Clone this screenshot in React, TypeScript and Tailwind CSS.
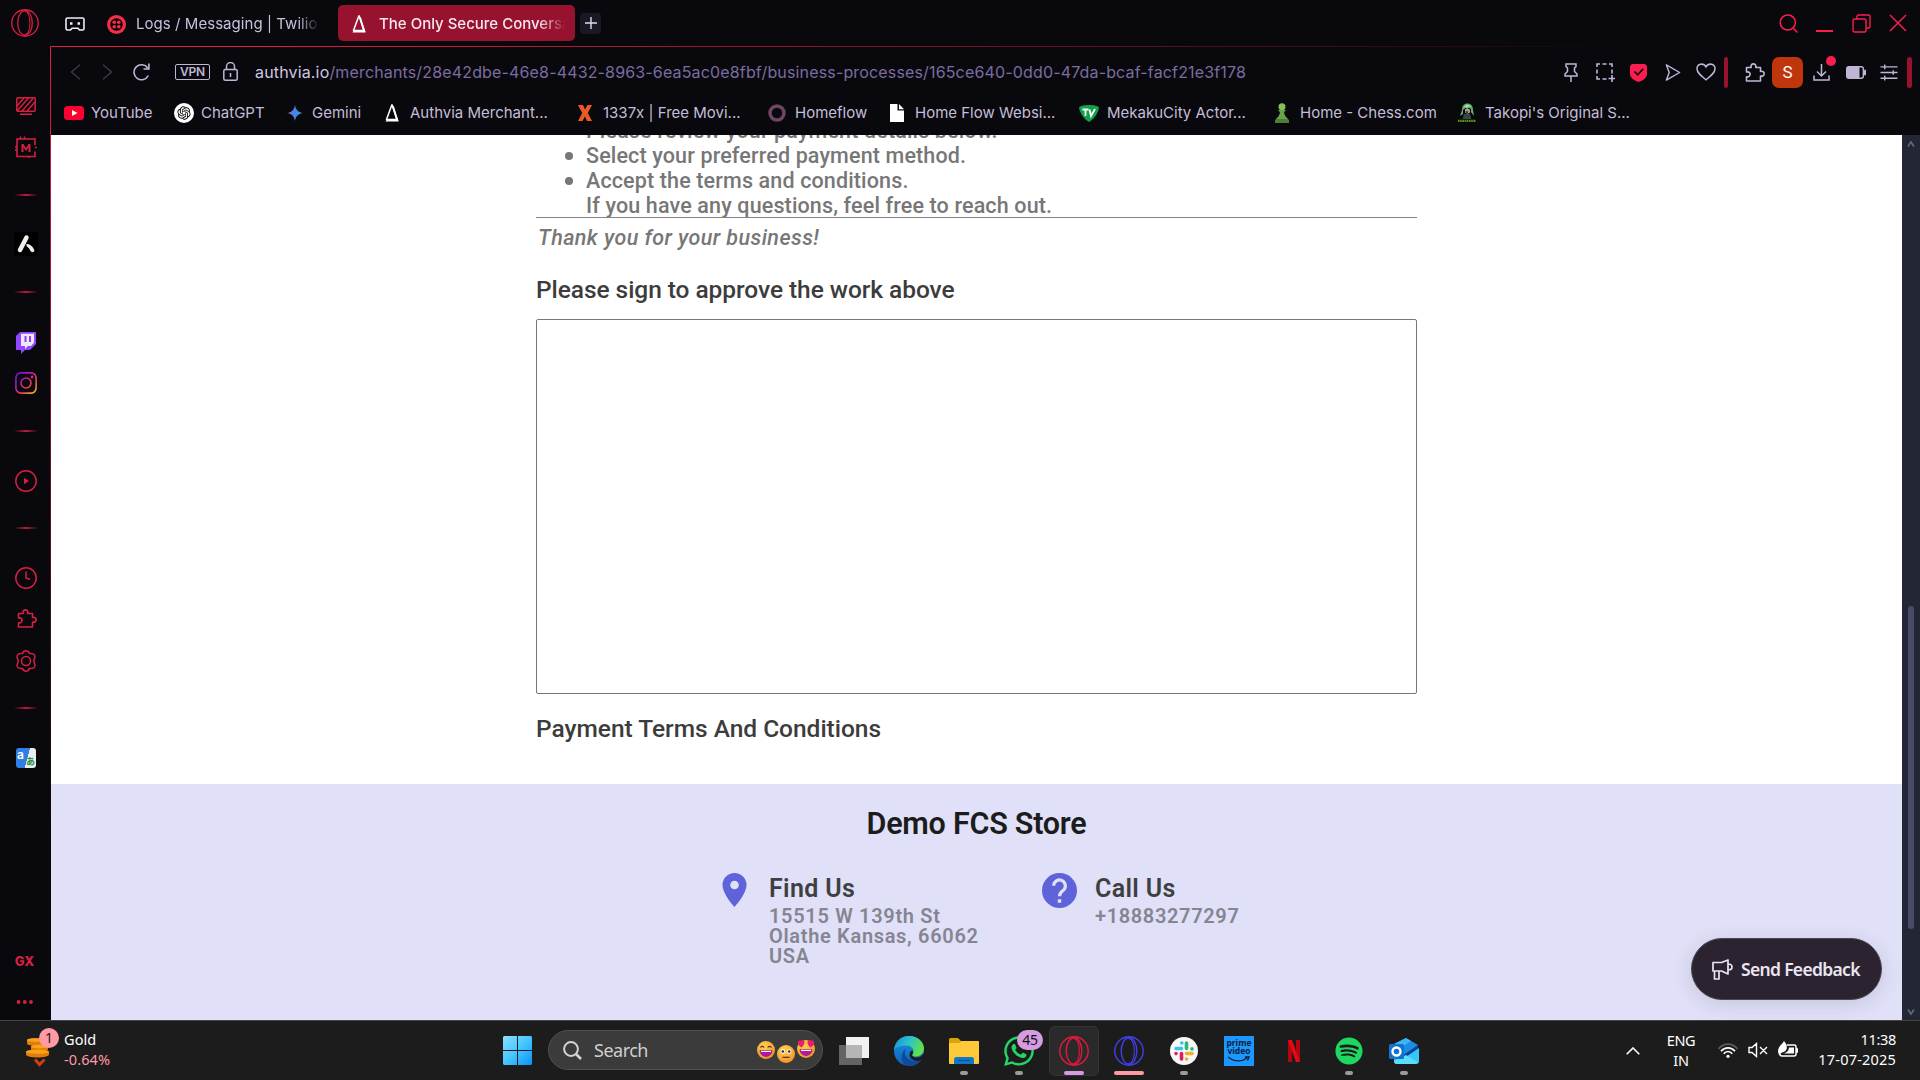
import React from "react";
import { FaSpotify, FaWhatsapp } from "react-icons/fa";
import { RiOpenaiFill } from "react-icons/ri";

type IconProps = { className?: string };

const Opera = ({ className = "" }: IconProps) => (
  <svg viewBox="0 0 30 30" fill="none" stroke="currentColor" strokeWidth="1.400" className={className}>
    <circle cx="15" cy="15" r="14.200" />
    <ellipse cx="15" cy="15" rx="7.800" ry="13.200" />
    <path d="M14.500 2.200C18.500 3 20.300 9 20.300 15S18.500 27 14.500 27.800" strokeWidth="1.100" />
  </svg>
);

const Puzzle = ({ className = "" }: IconProps) => (
  <svg viewBox="0 0 20 19" fill="none" stroke="currentColor" strokeWidth="1.600" strokeLinejoin="round" className={className}>
    <path d="M1.500 4.500H6.200C5.500 2.500 6.600.9 8.400.9s3 1.600 2.300 3.600h4.800v4c2-.6 3.700.4 3.700 2.200s-1.700 2.900-3.700 2.300v5H1.500v-4.300c2 .5 3.600-.6 3.600-2.400S3.500 8.500 1.500 9z" />
  </svg>
);

const AuthviaMark = ({ className = "" }: IconProps) => (
  <svg viewBox="0 0 14 19" fill="none" className={className}>
    <path d="M7 .5 1 17M7 .5 12.500 17" stroke="#fff" strokeWidth="1.600" />
    <path d="M8 2.500 12.800 18" stroke="#fff" strokeWidth="2" />
    <path d="M0 18.500 2.200 15.500H13.200L14 18.500z" fill="#fff" />
  </svg>
);

const bookmarks = [
  {
    label: "YouTube", width: "w-[110px]", gap: "w-[27px]",
    icon: <svg viewBox="0 0 20 14" className="w-5 h-3.5"><rect width="20" height="14" rx="3.500" fill="#ff0033" /><path d="M8 4l5.500 3L8 10z" fill="#fff" /></svg>,
  },
  {
    label: "ChatGPT", width: "w-[113px]", gap: "w-[27px]",
    icon: <div className="flex h-5 w-5 items-center justify-center rounded-full bg-white text-black"><RiOpenaiFill className="h-4 w-4" /></div>,
  },
  {
    label: "Gemini", width: "w-[98px]", gap: "w-[25px]",
    icon: (
      <svg viewBox="0 0 16 18" className="w-4 h-[18px]">
        <defs><linearGradient id="gem" x1="0" x2="1"><stop offset="0" stopColor="#8c6fc4" /><stop offset=".5" stopColor="#4285e8" /><stop offset="1" stopColor="#35a7d8" /></linearGradient></defs>
        <path d="M8 1c.9 5 3 7.200 8 8-5 .8-7.100 3-8 8-.9-5-3-7.200-8-8 5-.8 7.100-3 8-8z" fill="url(#gem)" />
      </svg>
    ),
  },
  { label: "Authvia Merchant...", width: "w-[193px]", gap: "w-[25px]", icon: <AuthviaMark className="w-3.5 h-[18px]" /> },
  {
    label: "1337x | Free Movi...", width: "w-[190px]", gap: "w-[25px]",
    icon: <svg viewBox="0 0 14 16" className="w-3.5 h-4"><path d="M0 0h5l2 4.500L9.500 0H14L9.800 8 14 16H9L7 11.500 4.500 16H0l4.200-8z" fill="#ea5a22" /></svg>,
  },
  { label: "Homeflow", width: "w-[122px]", gap: "w-[27px]", icon: <svg viewBox="0 0 18 18" className="w-[18px] h-[18px]"><circle cx="9" cy="9" r="7" fill="none" stroke="#6f4561" strokeWidth="3.500" /></svg> },
  {
    label: "Home Flow Websi...", width: "w-[189px]", gap: "w-[25px]",
    icon: <svg viewBox="0 0 14 18" className="w-3.5 h-[18px]"><path d="M0 0h7.500v6.500H14V18H0z" fill="#fff" /><path d="M9 0l5 5.200H9z" fill="#fff" /></svg>,
  },
  {
    label: "MekakuCity Actor...", width: "w-[196px]", gap: "w-[28px]",
    icon: <svg viewBox="0 0 20 18" className="w-5 h-[18px]"><path d="M0 3.500C1 0 19 0 20 3.500 19 10 14 16 10 18 6 16 1 10 0 3.500z" fill="#12a14b" /><path d="M3.500 5.500h6M6.500 5.500v6.500M10.500 5.500l1.500 6.500 4-7" fill="none" stroke="#fff" strokeWidth="1.800" /></svg>,
  },
  {
    label: "Home - Chess.com", width: "w-[182px]", gap: "w-[25px]",
    icon: <svg viewBox="0 0 14 20" className="w-3.5 h-5"><circle cx="7" cy="3.800" r="3.500" fill="#86c157" /><path d="M3.500 7h7v1.500H9c.2 3.500 1.500 5 4 7.500 1 1.500 1 4 1 4H0s0-2.500 1-4c2.500-2.500 3.800-4 4-7.500H3.500z" fill="#69a343" /><path d="M0 20s0-2.300 1-4h12c1 1.700 1 4 1 4z" fill="#4c8038" /></svg>,
  },
  {
    label: "Takopi's Original S...", width: "w-[200px]", gap: "w-[28px]",
    icon: (
      <svg viewBox="0 0 20 20" className="w-5 h-5">
        <rect width="20" height="20" fill="#070907" />
        <path d="M5 7C5 3 7 .5 10.500 .5S16 3 16 7l1 6-3-4V6l-4-2-4 3v4l-3 2z" fill="#63a970" />
        <path d="M8 6.500l2.500-1.500 2.500 2v2.500l-2.500 1.500L8 9.500z" fill="#b7a08c" />
        <path d="M7 3.500l3-2 4 1.500-4 2z" fill="#a5e0a4" />
        <path d="M8.500 8l3 .5-1 2h-1z" fill="#252a2c" />
        <path d="M7 11h6l1.500 5h-9z" fill="#38434a" />
        <path d="M1 17.800h18" stroke="#5c9426" strokeWidth="2.200" strokeDasharray="1.600 .6" />
      </svg>
    ),
  },
];

function TabBar() {
  return (
    <header className="flex h-[46px] w-full items-center text-[#c9c1dd]">
      <Opera className="ml-[11px] h-7 w-7 text-[#d81f42]" />
      <svg viewBox="0 0 20 14" className="ml-[26px] mt-px h-3.5 w-5" fill="none" stroke="#f1eef6" strokeWidth="1.600">
        <path d="M2.500 1h15a1.500 1.500 0 0 1 1.500 1.500v9A1.500 1.500 0 0 1 17.500 13h-3l-1.500-1.800h-6L5.500 13h-3A1.500 1.500 0 0 1 1 11.500v-9A1.500 1.500 0 0 1 2.500 1z" />
        <path d="M5 6.500h2.500M12.500 6.500H15" strokeWidth="2.500" />
      </svg>
      <svg viewBox="0 0 20 20" className="ml-[22px] mt-0.5 h-[19px] w-[19px]">
        <circle cx="10" cy="10" r="10" fill="#f22f46" />
        <circle cx="10" cy="10" r="6.600" fill="#16060c" />
        {[[7.600, 7.600], [12.400, 7.600], [7.600, 12.400], [12.400, 12.400]].map(([x, y]) => <circle key={`${x}-${y}`} cx={x} cy={y} r="1.900" fill="#f22f46" />)}
      </svg>
      <div className="ml-[10px] mt-0.5 w-[202px]">
        <div className="w-[184px] overflow-hidden whitespace-nowrap text-[15px] leading-5 tracking-[0.05px] [mask-image:linear-gradient(to_right,#000_88%,transparent)]">Logs / Messaging | Twilio Console</div>
      </div>
      <div className="flex h-[36px] w-[237px] items-center rounded-[5px] bg-[#96122e] pl-[14px]">
        <AuthviaMark className="mt-0.5 h-[18px] w-3.5 shrink-0" />
        <div className="ml-[13px] mt-0.5 w-[187px] overflow-hidden whitespace-nowrap text-[15px] font-medium leading-5 text-[#f7e9ee] [mask-image:linear-gradient(to_right,#000_85%,transparent)]">The Only Secure Conversational</div>
      </div>
      <div className="ml-[5px] flex h-[21px] w-[21px] items-center justify-center rounded bg-[#1b1825]">
        <svg viewBox="0 0 12 12" className="h-3 w-3" stroke="#e1dcec" strokeWidth="1.400"><path d="M6 0v12M0 6h12" /></svg>
      </div>
      <div className="ml-auto mr-[13px] flex items-center text-[#fa1e4e]">
        <svg viewBox="0 0 19 19" className="h-[19px] w-[19px]" fill="none" stroke="currentColor" strokeWidth="1.500"><circle cx="8.800" cy="8.500" r="7.600" /><path d="M14 14l4.500 4.500" /></svg>
        <svg viewBox="0 0 17 19" className="ml-[18px] h-[19px] w-[17px]" stroke="currentColor" strokeWidth="2"><path d="M0 17h17" /></svg>
        <svg viewBox="0 0 19 19" className="ml-[19px] h-[19px] w-[19px]" fill="none" stroke="currentColor" strokeWidth="1.400"><rect x="1" y="5" width="13" height="13" rx="1.500" /><path d="M5 5V2.500C5 1.500 5.500 1 6.500 1H16.500c1 0 1.500.5 1.500 1.500V12.500c0 1-.5 1.500-1.500 1.500H14" /></svg>
        <svg viewBox="0 0 18 18" className="ml-[18px] h-[18px] w-[18px]" stroke="currentColor" strokeWidth="1.500"><path d="M1 1l16 16M17 1L1 17" /></svg>
      </div>
    </header>
  );
}

function AddressBar() {
  return (
    <div className="flex h-[50px] items-center text-[#bfb6d6]">
      <svg viewBox="0 0 11 16" className="ml-[19px] h-4 w-[11px]" fill="none" stroke="#3c3846" strokeWidth="1.500"><path d="M10 .7 1.500 8l8.500 7.300" /></svg>
      <svg viewBox="0 0 11 16" className="ml-[21px] h-4 w-[11px]" fill="none" stroke="#3c3846" strokeWidth="1.500"><path d="M1 .7 9.500 8 1 15.300" /></svg>
      <svg viewBox="0 0 17 18" className="ml-[20px] h-[18px] w-[17px]" fill="none" stroke="currentColor" strokeWidth="1.600"><path d="M15.300 12.500A7.500 7.500 0 1 1 14.700 5M15.900.5V6H10.500" /></svg>
      <div className="ml-[25px] flex h-[16px] w-[35px] items-center justify-center rounded-[2px] border border-[#bfb6d6] text-[12px] font-semibold leading-none tracking-[-0.2px]">VPN</div>
      <svg viewBox="0 0 15 19" className="-mt-0.5 ml-[13px] h-[19px] w-[15px]" fill="none" stroke="currentColor" strokeWidth="1.500"><rect x=".8" y="7.500" width="13.400" height="10.700" rx="1.500" /><path d="M3.500 7.500V4.500a4 4 0 0 1 8 0v3M7.500 11v4" /></svg>
      <div className="ml-[17px] w-[1009px] whitespace-nowrap text-[16px] leading-6 tracking-[0.155px]">
        <span className="text-[#cfc7e2]">authvia.io</span><span className="text-[#7c6ca1]">/merchants/28e42dbe-46e8-4432-8963-6ea5ac0e8fbf/business-processes/165ce640-0dd0-47da-bcaf-facf21e3f178</span>
      </div>
      <div className="ml-auto mr-2 flex items-center">
        <svg viewBox="0 0 14 19" className="h-[19px] w-3.5" fill="none" stroke="currentColor" strokeWidth="1.500"><path d="M2 1h10v2.500L10.500 5v3.500l2.500 2.500v2H1v-2l2.500-2.500V5L2 3.500zM7 13v6" /></svg>
        <svg viewBox="0 0 19 19" className="ml-[18px] h-[19px] w-[19px]" fill="none" stroke="currentColor" strokeWidth="1.600"><path d="M1 4V1h3M6.500 1h4M13 1h3v3M16 6.500v4M1 6.500v4M1 13v3h3M6.500 16h4M16 12v7M12.500 15.500H19" /></svg>
        <svg viewBox="0 0 17 19" className="ml-[15px] h-[19px] w-[17px]"><path d="M2 1h13l2 2v8c0 4-5 7-8.500 8C5 18 0 15 0 11V3z" fill="#fa1e4e" /><path d="M4.500 8.500l3.200 3.300 5.500-6" stroke="#14060e" strokeWidth="1.700" fill="none" /></svg>
        <svg viewBox="0 0 16 18" className="ml-[18px] h-[17px] w-4" fill="none" stroke="currentColor" strokeWidth="1.500" strokeLinejoin="round"><path d="M1 1l14 8L1 17l3-8z" /></svg>
        <svg viewBox="0 0 20 18" className="ml-[15px] h-[18px] w-5" fill="none" stroke="currentColor" strokeWidth="1.500"><path d="M10 16.800C5 12.800 1 9.800 1 5.800 1 .5 7.500-.5 10 4c2.500-4.500 9-3.500 9 1.800 0 4-4 7-9 11z" /></svg>
        <div className="ml-[8px] h-[31px] w-[4px] rounded-sm bg-[#96122e]" />
        <Puzzle className="ml-[17px] h-[19px] w-5" />
        <div className="ml-[7px] flex h-[31px] w-[31px] items-center justify-center rounded-[7px] bg-[#bf360c] pt-0.5 text-[17px] text-white [font-family:Roboto,sans-serif]">S</div>
        <div className="relative ml-[10px] h-[18px] w-[17px]">
          <svg viewBox="0 0 17 18" className="h-[18px] w-[17px]" fill="none" stroke="currentColor" strokeWidth="1.500"><path d="M8.500 1v12M4 8.500l4.500 4.500L13 8.500M1 12.500V17h15v-4.500" /></svg>
          <span className="absolute -top-[7px] left-[13px] h-2.5 w-2.5 rounded-full bg-[#fa1e4e]" />
        </div>
        <svg viewBox="0 0 20 13" className="ml-[16px] h-[13px] w-5"><rect x=".7" y=".7" width="16.600" height="11.600" rx="2" fill="none" stroke="currentColor" strokeWidth="1.400" /><rect x="1" y="1" width="12.500" height="11" rx="1" fill="currentColor" /><rect x="18" y="3.500" width="2" height="6" rx="1" fill="currentColor" /></svg>
        <svg viewBox="0 0 18 18" className="ml-[14px] h-[17px] w-[18px]" stroke="currentColor" strokeWidth="1.500"><path d="M0 3h18M0 9h18M0 15h18M4.500.5v5M13.500 6.500v5M4.500 12.500v5" /></svg>
        <div className="ml-[9px] h-[31px] w-[5px] rounded-sm bg-[#96122e]" />
      </div>
    </div>
  );
}

function Bookmarks() {
  return (
    <nav className="flex h-[38px] items-center pb-[7px] pl-[13px]">
      {bookmarks.map((b) => (
        <div key={b.label} className={`flex shrink-0 items-center ${b.width}`}>
          <div className={`shrink-0 ${b.gap}`}>{b.icon}</div>
          <span className="whitespace-nowrap text-[15px] leading-5 text-[#c5bdd9]">{b.label}</span>
        </div>
      ))}
    </nav>
  );
}

const Line = ({ className = "" }: IconProps) => (
  <div className={`h-[2px] w-6 shrink-0 bg-linear-to-r from-transparent via-[#c01c3c] to-transparent ${className}`} />
);

function Sidebar() {
  return (
    <aside className="flex w-[50px] shrink-0 flex-col items-center pl-[2px] text-[#d81f42]">
      <svg viewBox="0 0 20 18" className="mt-[51px] h-[18px] w-5 shrink-0" fill="none" stroke="currentColor" strokeWidth="1.500"><rect x=".8" y=".8" width="18.400" height="13.400" rx="1" /><path d="M1 9l7-8M1 14 12.500 1M6 14 17 1.500M11 14l8-9M4 17.300h12" /></svg>
      <svg viewBox="0 0 22 22" className="mt-[21px] h-[22px] w-[22px] shrink-0" fill="none" stroke="currentColor" strokeWidth="1.600"><path d="M20 9V3H2V20.500H20V15.500M5.500 3V.5M9.500 3V.5M2 11H0M2 14H0M20 11.500h2M14 20v2" /><path d="M7.500 16V8M14.500 16V8" strokeWidth="2" /><path d="M7.500 8.500l3.500 5 3.500-5" strokeWidth="1.700" /></svg>
      <Line className="mt-[36px]" />
      <svg viewBox="0 0 24 24" className="mt-[36px] h-6 w-6 shrink-0"><rect width="24" height="24" rx="3" fill="#000" /><path d="M12.500 5.500 6 18" stroke="#f1efec" strokeWidth="4.500" strokeLinecap="round" /><path d="M12.500 12c3-.5 7 2.500 8 7-1 1.500-3 1.500-4 0-1-2-2-3.500-4-5z" fill="#f1efec" /></svg>
      <Line className="mt-[35px]" />
      <svg viewBox="0 0 20 22" className="mt-[39px] h-[22px] w-5 shrink-0"><path d="M4 0h16v12l-6 6H9l-4 4v-4H0V4z" fill="#9146ff" /><path d="M5 1.800h13v9L15 14h-3l-3 3v-3H5z" fill="#eee8f8" /><path d="M9.500 4v6M14 4v6" stroke="#8a45ee" strokeWidth="2" /></svg>
      <svg viewBox="0 0 22 22" className="mt-[18px] h-[22px] w-[22px] shrink-0" fill="none" stroke="url(#insta)" strokeWidth="1.600">
        <defs><linearGradient id="insta" x1="0" y1="0" x2="22" y2="22" gradientUnits="userSpaceOnUse"><stop stopColor="#5b12f0" /><stop offset=".35" stopColor="#b818b8" /><stop offset=".65" stopColor="#f0404a" /><stop offset="1" stopColor="#f6d320" /></linearGradient></defs>
        <rect x=".9" y=".9" width="20.200" height="20.200" rx="5" /><circle cx="11" cy="11" r="5" /><circle cx="17" cy="5" r=".6" />
      </svg>
      <Line className="mt-[36px]" />
      <svg viewBox="0 0 22 22" className="mt-[38px] h-[22px] w-[22px] shrink-0" fill="none" stroke="currentColor" strokeWidth="1.500"><circle cx="11" cy="11" r="10.200" /><path d="M9 7.800l5 3.200-5 3.200z" fill="currentColor" stroke="none" /></svg>
      <Line className="mt-[35px]" />
      <svg viewBox="0 0 22 22" className="mt-[38px] h-[22px] w-[22px] shrink-0" fill="none" stroke="currentColor" strokeWidth="1.500"><circle cx="11" cy="11" r="10.200" /><path d="M11 4.500V11l4 1.500" /></svg>
      <Puzzle className="ml-[2px] mt-[20px] h-[19px] w-5 shrink-0" />
      <svg viewBox="0 0 22 22" className="mt-[22px] h-[22px] w-[22px] shrink-0" fill="none" stroke="currentColor" strokeWidth="1.500" strokeLinejoin="round"><path d="M11 .8c2 0 2.700.8 3.500 2.800 2-.2 3.700-.4 5 1.300 1.400 2 .4 3.200-.6 5v2.200c1 1.800 2 3 .6 5-1.300 1.700-3 1.500-5 1.300-.8 2-1.500 2.800-3.500 2.800s-2.700-.8-3.500-2.800c-2 .2-3.700.4-5-1.300-1.400-2-.4-3.200.6-5V9.900c-1-1.800-2-3-.6-5 1.300-1.700 3-1.500 5-1.300C8.300 1.600 9 .8 11 .8z" /><circle cx="11" cy="11" r="4.500" /></svg>
      <Line className="mt-[35px]" />
      <div className="mt-[39px] flex h-5 w-5 shrink-0 justify-between overflow-hidden rounded-[3px] bg-[linear-gradient(105deg,#2f80e4_55%,#e9eef0_56%)] px-px text-[12px] font-semibold leading-[13px] text-white">
        <span>a</span><span className="mt-[9px] text-[9px] leading-[10px] text-[#2e8b3e] [font-family:'Noto_Sans_CJK_JP',sans-serif]">あ</span>
      </div>
      <div className="mr-[3px] mt-auto text-[13px] font-extrabold leading-3">GX</div>
      <svg viewBox="0 0 18 4" className="mb-[16px] mr-[2px] mt-[33px] h-1 w-[18px] shrink-0" fill="currentColor"><circle cx="2.500" cy="2" r="1.900" /><circle cx="8.800" cy="2" r="1.900" /><circle cx="15" cy="2" r="1.900" /></svg>
    </aside>
  );
}

function Page() {
  return (
    <div className="flex min-h-0 flex-1">
      <main className="flex flex-1 flex-col overflow-hidden bg-white [font-family:Roboto,sans-serif]">
        <div className="flex h-[649px] shrink-0 flex-col overflow-hidden pl-[485px]">
          <ul className="-mt-[17px] list-none pl-[50px] text-[21.500px] font-medium leading-[25px] tracking-[0.14px] text-[#777]">
            {["Please review your payment details below.", "Select your preferred payment method.", "Accept the terms and conditions."].map((t) => (
              <li key={t} className="flex items-center whitespace-nowrap before:mr-[13px] before:-ml-[21px] before:h-2 before:w-2 before:rounded-full before:bg-[#777]">{t}</li>
            ))}
            <li>If you have any questions, feel free to reach out.</li>
          </ul>
          <div className="-mt-px w-[881px] border-t border-[#858585]" />
          <p className="ml-[2px] mt-[7px] text-[21.500px] font-medium italic leading-[25px] tracking-[0.43px] text-[#777]">Thank you for your business!</p>
          <h2 className="mt-[25px] text-[24.500px] font-medium leading-[30px] tracking-[-0.06px] text-[#3c3c3c]">Please sign to approve the work above</h2>
          <div className="mt-[14px] h-[375px] w-[881px] shrink-0 rounded-[2px] border border-[#777]" />
          <h2 className="mt-[20px] text-[24.500px] font-medium leading-[30px] tracking-[-0.02px] text-[#3c3c3c]">Payment Terms And Conditions</h2>
        </div>
        <footer className="flex flex-1 flex-col bg-[#e0e0f8]">
          <h1 className="mt-[22px] text-center text-[30.500px] font-semibold leading-[36px] tracking-[-0.25px] text-[#1c1c1c]">Demo FCS Store</h1>
          <div className="mt-[31px] flex items-start">
            <svg viewBox="0 0 24 34" className="ml-[671px] h-[34px] w-[25px] shrink-0"><path fillRule="evenodd" d="M12 0A12 12 0 0 0 0 12c0 9 12 22 12 22s12-13 12-22A12 12 0 0 0 12 0zm0 7.700a4.300 4.300 0 1 1 0 8.600 4.300 4.300 0 0 1 0-8.600z" fill="#5f63da" /></svg>
            <div className="ml-[22px] w-[273px] text-[#858591]">
              <h3 className="text-[25px] font-semibold leading-[31px] tracking-[0.35px] text-[#3f3f3f]">Find Us</h3>
              <p className="mt-[2px] text-[20px] font-semibold leading-[20px] tracking-[0.68px]">15515 W 139th St<br />Olathe Kansas, 66062<br />USA</p>
            </div>
            <svg viewBox="0 0 24 24" className="h-[35px] w-[35px] shrink-0"><circle cx="12" cy="12" r="12" fill="#5f63da" /><path d="M8 8.800a4 4 0 1 1 6.400 3.200c-1.400 1.200-2.400 1.800-2.400 4" fill="none" stroke="#e0e0f8" strokeWidth="2.200" /><path d="M10.800 18h2.400v2.400h-2.400z" fill="#e0e0f8" /></svg>
            <div className="ml-[18px] text-[#858591]">
              <h3 className="text-[25px] font-semibold leading-[31px] tracking-[0.35px] text-[#3f3f3f]">Call Us</h3>
              <p className="mt-[2px] text-[20px] font-semibold leading-[20px] tracking-[0.65px]">+18883277297</p>
            </div>
          </div>
        </footer>
      </main>
      <div className="flex w-[18px] shrink-0 flex-col items-center bg-[#232735]">
        <svg viewBox="0 0 8 8" className="mt-[5px] h-2 w-2" fill="none" stroke="#666a70" strokeWidth="1.600"><path d="M1 6.500 4 2l3 4.500" /></svg>
        <div className="mt-[458px] h-[323px] w-[6px] rounded-full bg-[#484b68]" />
        <svg viewBox="0 0 8 8" className="mb-[4px] mt-auto h-2 w-2" fill="none" stroke="#666a70" strokeWidth="1.600"><path d="M1 1.500 4 6l3-4.500" /></svg>
      </div>
    </div>
  );
}

function Feedback() {
  return (
    <button className="absolute left-[1691px] top-[938px] flex h-[62px] w-[191px] items-center rounded-full border border-[#4c4655] bg-[#2b2430] pl-[20px] text-[#ebe5f1] shadow-[0_4px_20px_rgba(40,36,70,0.14)]">
      <svg viewBox="0 0 21 21" className="h-[21px] w-[21px]" fill="none" stroke="currentColor" strokeWidth="1.700" strokeLinejoin="round"><path d="M1 3.500h8.500L16 1v14l-6.500-3H1zM2.500 12v8H7v-8M16 5c2.500 0 4 1 4 3s-1.500 3-4 3" /></svg>
      <span className="ml-[8px] whitespace-nowrap text-[17.500px] font-semibold leading-6 tracking-[-0.68px] [font-family:'Noto_Sans',sans-serif]">Send Feedback</span>
    </button>
  );
}

const Emoji = ({ kind, className = "" }: { kind: "grin" | "flat" | "heart"; className?: string }) => (
  <svg viewBox="0 0 18 18" className={`h-[18px] w-[18px] ${className}`}>
    <defs><radialGradient id={`face-${kind}`} cx=".4" cy=".3" r=".8"><stop stopColor="#ffd34d" /><stop offset="1" stopColor="#f08a2c" /></radialGradient></defs>
    <circle cx="9" cy="9" r="9" fill={`url(#face-${kind})`} />
    {kind === "flat" ? (
      <><circle cx="5.800" cy="6.500" r="2.200" fill="#fff" /><circle cx="12.200" cy="6.500" r="2.200" fill="#fff" /><circle cx="5.800" cy="6.500" r="1.300" fill="#3a2340" /><circle cx="12.200" cy="6.500" r="1.300" fill="#3a2340" /><path d="M5.500 12.300h7" stroke="#5a2a22" strokeWidth="1.200" /></>
    ) : (
      <path d="M3 9.500h12c0 3.500-2.500 6-6 6s-6-2.500-6-6z" fill="#b5179e" stroke="#7a1266" strokeWidth=".5" />
    )}
    {kind !== "flat" && <path d="M4 9.800h10v1.200H4z" fill="#fff" />}
    {kind === "grin" && <path d="M3.500 6.500c.7-1.600 3-1.600 3.700 0M10.800 6.500c.7-1.600 3-1.600 3.700 0" stroke="#5a2a22" strokeWidth="1.200" fill="none" />}
    {kind === "heart" && <path d="M4.500 7.500C-1 4 .5-.5 3.500.7c1.500-1.500 4.500-.2 4 2.300C7 5.500 5.500 6.500 4.500 7.500zM13.500 7.500C19 4 17.500-.5 14.500.7c-1.500-1.500-4.500-.2-4 2.300.5 2.500 2 3.500 3 4.500z" fill="#ee1c6a" />}
  </svg>
);

const AppCell = ({ children, bar = "", active = false }: { children: React.ReactNode; bar?: string; active?: boolean }) => (
  <div className={`mx-[2.5px] flex h-[50px] w-[50px] shrink-0 flex-col items-center rounded-md ${active ? "border border-[#343434] bg-[#2a2a2a] pt-0" : "pt-px"}`}>
    <div className="relative mt-[9px] flex h-[30px] w-[30px] items-center justify-center">{children}</div>
    <div className={`mt-[5px] h-1 shrink-0 rounded-full ${bar}`} />
  </div>
);

function Taskbar() {
  return (
    <div className="flex h-[60px] w-full items-center border-t border-[#434343] bg-[#1c1c1c] text-white [font-family:'Noto_Sans',sans-serif]">
      <div className="flex h-full w-[503px] items-center">
        <div className="relative ml-[26px] h-7 w-6">
          <svg viewBox="0 0 24 30" className="h-[30px] w-6">
            <path d="M1 3.500c0-3 17-3 17 0v3c0 3-17 3-17 0zM5 9.500c0-3 17-3 17 0v3c0 3-17 3-17 0zM0 15c0-3 23-3 23 0v2.500c0 4-23 4-23 0z" fill="#e07c08" />
            <path d="M1 3c0-2.500 17-2.500 17 0s-17 2.500-17 0zM5 9.500c0-2.500 17-2.500 17 0s-17 2.500-17 0zM0 14.800c0-2.800 23-2.800 23 0s-23 2.800-23 0z" fill="#f9a11b" />
            <path d="M9 22.500l4.500 5 5-5" fill="none" stroke="#cb3f10" strokeWidth="3" />
          </svg>
          <span className="absolute -top-[9px] left-[13px] flex h-5 w-5 items-center justify-center rounded-full bg-[#ff99a4] text-[14px] leading-none text-[#1c1c1c]">1</span>
        </div>
        <div className="-mt-1 ml-[14px] text-[14.500px] leading-5 tracking-[0.1px]"><div>Gold</div><div className="text-[#ff99a4]">-0.64%</div></div>
      </div>
      <svg viewBox="0 0 29 29" className="h-[29px] w-[29px]">
        <defs><linearGradient id="win" x1="0" y1="0" x2="1" y2="1"><stop stopColor="#8be0ff" /><stop offset=".5" stopColor="#45c6ff" /><stop offset="1" stopColor="#0a92f5" /></linearGradient></defs>
        <path d="M1 0h13v14H0V1zM15 0h13l1 1v13H15zM0 15h14v14H1l-1-1zM15 15h14v13l-1 1H15z" fill="url(#win)" />
      </svg>
      <div className="-mt-px ml-[16px] mr-[3.500px] flex h-10 w-[275px] shrink-0 items-center rounded-full border border-[#505050] bg-[#3b3b3b]">
        <svg viewBox="0 0 19 19" className="ml-[14px] h-[19px] w-[19px]" fill="none" stroke="#d3d3d8" strokeWidth="2"><circle cx="8" cy="8" r="6.900" /><path d="M13 13l5 5" strokeWidth="2.600" /></svg>
        <span className="ml-[12px] w-[163px] text-[18px] leading-6 tracking-[-0.5px] text-[#cfcfcf]">Search</span>
        <Emoji kind="grin" className="-mt-[1px]" />
        <Emoji kind="flat" className="ml-[2px] mt-[8px]" />
        <Emoji kind="heart" className="-mt-[3px] ml-[2px]" />
      </div>
      <AppCell><svg viewBox="0 0 30 28" className="h-7 w-[30px]"><rect x="7" y="0" width="23" height="21" fill="#f2f2f2" /><rect x="0" y="8" width="23" height="20" fill="#777" fillOpacity=".8" /><rect x="7" y="8" width="16" height="13" fill="#b5b5b5" /></svg></AppCell>
      <AppCell>
        <svg viewBox="0 0 30 30" className="h-[30px] w-[30px]">
          <defs>
            <linearGradient id="edge1" x1="0" y1="0" x2="1" y2=".4"><stop stopColor="#1689d8" /><stop offset=".5" stopColor="#2cc0d2" /><stop offset="1" stopColor="#5fe04c" /></linearGradient>
            <linearGradient id="edge2" x1="0" y1="0" x2="0" y2="1"><stop stopColor="#1c95e0" /><stop offset="1" stopColor="#0b5fb8" /></linearGradient>
          </defs>
          <circle cx="15" cy="15" r="15" fill="url(#edge2)" />
          <path d="M0 14C1 5 7 0 15 0c9 0 15 6 15 12.500 0 5-4 8-8.500 8-3 0-4.500-1-3-2.500 3-4-.5-8.500-6.500-8.500C6 9.500 2 11 0 14z" fill="url(#edge1)" />
          <path d="M12 12c-3 5 0 13 9 13 3 0 5-.8 7-1.800C25 28 20 30 16 30 8 30 4 20 12 12z" fill="#114a98" />
          <path d="M19 17.500c-2 2 0 4 4 4 2.500 0 5-1.500 6.500-4.500 1 2.500.5 5-1 6.500-2 1.500-5.500 1.800-8 1-5-1.500-6-6-4-9 1-1.500 3-1 2.500 2z" fill="#1c1c1c" />
        </svg>
      </AppCell>
      <AppCell bar="w-2 bg-[#9a9a9a]"><svg viewBox="0 0 30 26" className="h-[26px] w-[30px]"><path d="M0 1.500Q0 0 1.500 0H9l3 3h17.500v5H0z" fill="#dea106" /><path d="M0 5h10l3-2h16q1 0 1 1v21q0 1-1 1H1q-1 0-1-1z" fill="#ffca3a" /><path d="M5 26v-4.500Q5 19 7.500 19h15q2.500 0 2.500 2.500V26z" fill="#0f78c8" /><path d="M9 22.500h12" stroke="#0a4f90" /></svg></AppCell>
      <AppCell bar="w-2 bg-[#9a9a9a]">
        <FaWhatsapp className="h-[34px] w-[34px] shrink-0 text-[#25d366]" />
        <span className="absolute -top-[6px] left-[13px] flex h-5 w-[26px] items-center justify-center rounded-full bg-[#d79be3] text-[14px] leading-none tracking-[-0.3px] text-[#111]">45</span>
      </AppCell>
      <AppCell active bar="w-5 bg-[#d79be3]"><Opera className="h-[30px] w-[30px] text-[#e3183f]" /></AppCell>
      <AppCell bar="w-[30px] bg-[#ff99a4]"><Opera className="h-[30px] w-[30px] text-[#4040e8]" /></AppCell>
      <AppCell bar="w-2 bg-[#9a9a9a]">
        <svg viewBox="0 0 28 28" className="h-7 w-7">
          <circle cx="14" cy="14" r="14" fill="#f7f7f7" />
          <g strokeWidth="3.600" strokeLinecap="round">
            <path d="M6 11.500h5.500M11.800 6h.1" stroke="#36c5f0" /><path d="M16.500 6v5.500M22 11.800v.1" stroke="#2eb67d" />
            <path d="M16.500 16.500H22M16.500 22h.1" stroke="#ecb22e" /><path d="M11.500 16.500V22M6 16.500v.1" stroke="#e01e5a" />
          </g>
        </svg>
      </AppCell>
      <AppCell>
        <div className="flex h-[30px] w-[30px] shrink-0 flex-col items-center bg-[#1a98ff] pt-[3px] text-[8.500px] font-bold leading-[8px] text-[#0c2038]">
          <span>prime</span><span>video</span>
          <svg viewBox="0 0 22 6" className="mt-px h-[6px] w-[22px]" fill="none" stroke="currentColor" strokeWidth="1.300"><path d="M0 1c6 5 14 5 19 1M17 1h4l-1.500 3.500" /></svg>
        </div>
      </AppCell>
      <AppCell><svg viewBox="0 0 12 22" className="h-[22px] w-3"><path d="M0 0h4v22H0zM8 0h4v22H8z" fill="#b1060f" /><path d="M0 0h4l8 22H8z" fill="#e50914" /></svg></AppCell>
      <AppCell bar="w-2 bg-[#9a9a9a]"><FaSpotify className="h-7 w-7 text-[#1ed760]" /></AppCell>
      <AppCell bar="w-2 bg-[#9a9a9a]">
        <svg viewBox="0 0 30 26" className="h-[26px] w-[30px]">
          <path d="M5 6 17 0l12 7v6L16 18H5z" fill="#1c8ce0" /><path d="M5 6l12-6 5 3-12 8H5z" fill="#3fb4f4" />
          <path d="M29 7v6l-13 8-3-3z" fill="#0a3f9a" /><path d="M30 10v13q0 3-3 3H8q-3 0-3-3v-3l11-.5z" fill="#36c7f2" /><path d="M5 23l12-6 12 7q-1 2-3 2H8q-3 0-3-3z" fill="#5adcfb" />
          <rect y="6" width="15" height="15" rx="1.500" fill="#1173cf" /><circle cx="7.500" cy="13.500" r="4" fill="none" stroke="#fff" strokeWidth="2.400" />
        </svg>
      </AppCell>
      <div className="ml-auto mr-6 flex items-center text-[14.500px] leading-5 tracking-[-0.3px]">
        <svg viewBox="0 0 14 8" className="h-2 w-3.5" fill="none" stroke="#fff" strokeWidth="1.600"><path d="M.7 7.300 7 1l6.300 6.300" /></svg>
        <div className="-mt-[2px] ml-[23px] w-[36px] text-center">ENG<br />IN</div>
        <svg viewBox="0 0 20 16" className="ml-[19px] h-4 w-5" fill="none" stroke="#fff" strokeWidth="1.600"><path d="M.5 6c5-6.500 14-6.500 19 0" stroke="#5c5c5c" /><path d="M3 8.200c3.800-4.500 10.200-4.500 14 0M5.700 10.700c2.300-3 6.300-3 8.600 0" /><circle cx="10" cy="13.300" r="1.600" fill="#fff" stroke="none" /></svg>
        <svg viewBox="0 0 20 16" className="-mt-0.5 ml-[10px] h-4 w-5" fill="none" stroke="#fff" strokeWidth="1.400"><path d="M1 5.500h3L8.500 1.500v13L4 10.500H1zM12 5l7 7M19 5l-7 7" /></svg>
        <svg viewBox="0 0 20 17" className="-mt-[3px] ml-[10px] h-[17px] w-5"><path d="M9 4h7.500Q18 4 18 6v7q0 2-2 2H4q-2 0-2-2" fill="none" stroke="#fff" strokeWidth="1.500" /><path d="M0 11C0 5 3 5 6 0c5 5 3 11-2 11.500L1 14z" fill="#fff" /><path d="M11 6.500h5v6H6c3-1 5-3 5-6z" fill="#fff" /><rect x="18" y="7" width="2" height="5" rx="1" fill="#fff" /></svg>
        <div className="-mt-1 ml-[9px] w-[89px] whitespace-nowrap text-right"><div>11:38</div><div className="tracking-[0.2px]">17-07-2025</div></div>
      </div>
    </div>
  );
}

export default function App() {
  return (
    <div className="relative flex h-[1080px] w-[1920px] flex-col overflow-hidden bg-[#09080d] [font-family:Inter,sans-serif]">
      <TabBar />
      <div className="flex min-h-0 flex-1">
        <Sidebar />
        <div className="flex min-w-0 flex-1 flex-col">
          <div className="h-px w-full rounded-tl bg-linear-to-r from-[#e01f43] from-10% to-transparent to-85%" />
          <div className="flex min-h-0 flex-1">
            <div className="w-px bg-linear-to-b from-[#e01f43] to-transparent to-80%" />
            <div className="flex min-w-0 flex-1 flex-col">
              <AddressBar />
              <Bookmarks />
              <Page />
            </div>
          </div>
        </div>
      </div>
      <Taskbar />
      <Feedback />
    </div>
  );
}
